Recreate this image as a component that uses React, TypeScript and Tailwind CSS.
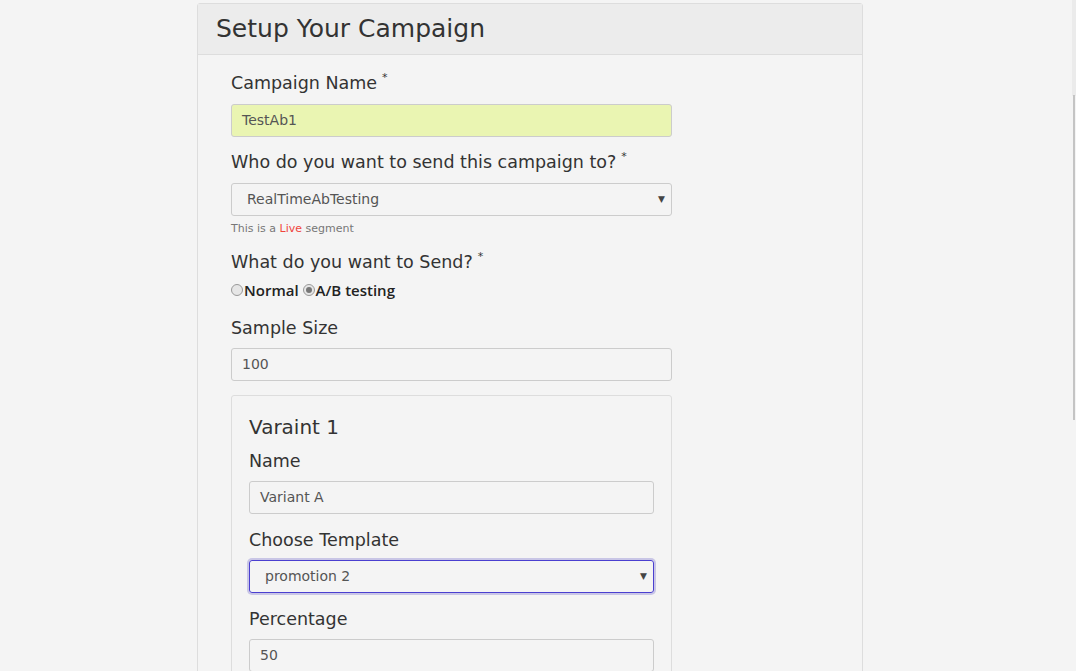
const font = { fontFamily: '"DejaVu Sans", "Open Sans", sans-serif' };

const Req = () => <sup className="ml-[5px] -top-[8px] text-[11px] text-[#333]">*</sup>;

const Label = ({ children, req, tight }: { children: React.ReactNode; req?: boolean; tight?: boolean }) => (
  <div className={`text-[17.5px] leading-[22px] text-[#333] ${tight ? "mb-[9px]" : "mb-[10px]"}`}>
    {children}
    {req && <Req />}
  </div>
);

const TextBox = ({ value, className = "" }: { value: string; className?: string }) => (
  <div
    className={`h-[33px] rounded-[3px] border border-[#ccc] px-[10px] flex items-center text-[14px] text-[#555] ${className}`}
  >
    {value}
  </div>
);

const SelectBox = ({ value, focused }: { value: string; focused?: boolean }) => (
  <div
    className={
      "h-[33px] rounded-[3px] border pl-[15px] pr-[6px] flex items-center justify-between text-[14px] text-[#555] " +
      (focused
        ? "border-[#4a3fd0] ring-2 ring-[#c9c6e6]"
        : "border-[#ccc]")
    }
  >
    <span>{value}</span>
    <span className="text-[9px] text-[#444]">▼</span>
  </div>
);

export default function App() {
  return (
    <div className="min-h-[671px] bg-[#f4f4f4] relative overflow-hidden" style={font}>
      <div className="absolute right-0 top-0 w-[4px] h-[96px] bg-[#ebebeb]" />
      <div className="absolute right-[1px] top-[95px] w-[2px] h-[325px] bg-[#c4c4c4]" />
      <div className="pt-[3px] pl-[197px]">
        <div className="w-[666px] border border-[#ddd] rounded-[3px]">
          <div className="h-[51px] bg-[#ececec] border-b border-[#ddd] px-[18px] flex items-center">
            <h1 className="text-[25px] text-[#333]">Setup Your Campaign</h1>
          </div>
          <div className="pl-[33px] pt-[17px] pb-6 w-[474px]">
            <Label req>Campaign Name</Label>
            <TextBox value="TestAb1" className="bg-[#eaf5b2] text-[#222]" />

            <div className="mt-[14px]">
              <Label req>Who do you want to send this campaign to?</Label>
              <SelectBox value="RealTimeAbTesting" />
              <div className="mt-[5px] text-[11px] text-[#777]">
                This is a <span className="text-[#f0453c]">Live</span> segment
              </div>
            </div>

            <div className="mt-[13px]">
              <div className="text-[17.5px] leading-[22px] text-[#333] mb-[6px]">
                What do you want to Send?
                <Req />
              </div>
              <div
                className="flex items-center text-[15px] font-semibold text-[#222]"
                style={{ fontFamily: '"Open Sans", sans-serif' }}
              >
                <span className="w-[12px] h-[12px] rounded-full border border-[#999] bg-[#e6e6e6]" />
                <span className="ml-[1px]">Normal</span>
                <span className="ml-[4px] w-[12px] h-[12px] rounded-full border border-[#999] bg-[#e6e6e6] flex items-center justify-center">
                  <span className="w-[6px] h-[6px] rounded-full bg-[#777]" />
                </span>
                <span className="ml-[1px]">A/B testing</span>
              </div>
            </div>

            <div className="mt-[16px]">
              <Label tight>Sample Size</Label>
              <TextBox value="100" />
            </div>

            <div className="mt-[14px] border border-[#ddd] rounded-[3px] px-[17px] pt-[16px] pb-4">
              <div className="text-[20px] text-[#333] mb-[8px]">Varaint 1</div>
              <Label tight>Name</Label>
              <TextBox value="Variant A" />
              <div className="mt-[15px]">
                <Label tight>Choose Template</Label>
                <SelectBox value="promotion 2" focused />
              </div>
              <div className="mt-[15px]">
                <Label tight>Percentage</Label>
                <TextBox value="50" />
              </div>
            </div>
          </div>
        </div>
      </div>
    </div>
  );
}
